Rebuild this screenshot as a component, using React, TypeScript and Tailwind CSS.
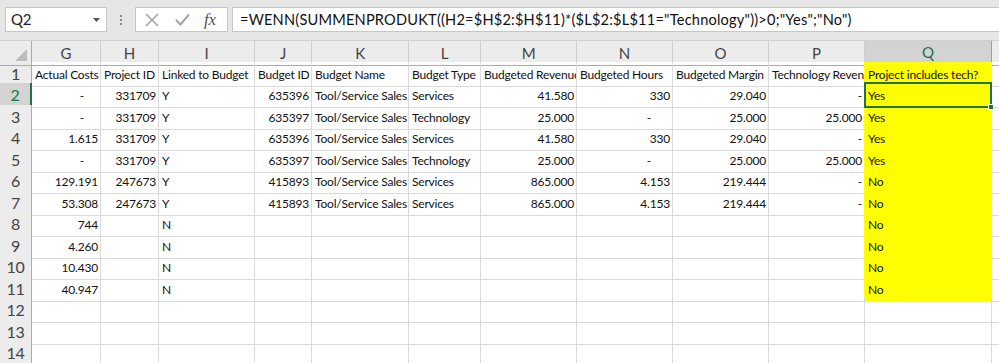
import React from 'react';

type Align = 'l' | 'r' | 'dashG' | 'dashN';

const aligns: Align[] = ['r', 'r', 'l', 'r', 'l', 'l', 'r', 'r', 'r', 'r', 'l'];
const letters = ['G', 'H', 'I', 'J', 'K', 'L', 'M', 'N', 'O', 'P', 'Q'];

const header = [
  'Actual Costs',
  'Project ID',
  'Linked to Budget',
  'Budget ID',
  'Budget Name',
  'Budget Type',
  'Budgeted Revenue',
  'Budgeted Hours',
  'Budgeted Margin',
  'Technology Revenue',
  'Project includes tech?',
];

const S = 'Tool/Service Sales';

const data: string[][] = [
  ['-', '331709', 'Y', '635396', S, 'Services', '41.580', '330', '29.040', '-', 'Yes'],
  ['-', '331709', 'Y', '635397', S, 'Technology', '25.000', '-', '25.000', '25.000', 'Yes'],
  ['1.615', '331709', 'Y', '635396', S, 'Services', '41.580', '330', '29.040', '-', 'Yes'],
  ['-', '331709', 'Y', '635397', S, 'Technology', '25.000', '-', '25.000', '25.000', 'Yes'],
  ['129.191', '247673', 'Y', '415893', S, 'Services', '865.000', '4.153', '219.444', '-', 'No'],
  ['53.308', '247673', 'Y', '415893', S, 'Services', '865.000', '4.153', '219.444', '-', 'No'],
  ['744', '', 'N', '', '', '', '', '', '', '', 'No'],
  ['4.260', '', 'N', '', '', '', '', '', '', '', 'No'],
  ['10.430', '', 'N', '', '', '', '', '', '', '', 'No'],
  ['40.947', '', 'N', '', '', '', '', '', '', '', 'No'],
  ['', '', '', '', '', '', '', '', '', '', ''],
  ['', '', '', '', '', '', '', '', '', '', ''],
  ['', '', '', '', '', '', '', '', '', '', ''],
];

const GRID = 'grid grid-cols-[32px_69px_58px_96px_57px_97px_72px_96px_96px_96px_96px_127px_7px]';

const FormulaBar: React.FC = () => (
  <div className="h-[40px] bg-[#e6e6e6] flex items-start pt-[7px]">
    {/* Name box */}
    <div className="ml-[5px] w-[102px] h-[25px] bg-white border border-[#c6c6c6] flex items-center justify-between pl-[5px] pr-[6px]">
      <span className="text-[15px] text-[#222]">Q2</span>
      <svg width="7" height="4" viewBox="0 0 7 4">
        <path d="M0 0h7L3.5 4z" fill="#555" />
      </svg>
    </div>
    <div className="w-[28px] h-[25px] flex flex-col items-center justify-center gap-[2px]">
      <span className="w-[2px] h-[2px] bg-[#8a8a8a]" />
      <span className="w-[2px] h-[2px] bg-[#8a8a8a]" />
      <span className="w-[2px] h-[2px] bg-[#8a8a8a]" />
    </div>
    {/* Cancel / Enter / fx */}
    <div className="w-[93px] h-[25px] bg-white border border-[#c6c6c6] flex items-center">
      <svg className="ml-[9px]" width="14" height="14" viewBox="0 0 14 14">
        <path d="M1 1l12 12M13 1L1 13" stroke="#a3a3a3" strokeWidth="1.6" fill="none" />
      </svg>
      <svg className="ml-[16px]" width="15" height="13" viewBox="0 0 15 13">
        <path d="M1 7l4.5 4.5L14 1.5" stroke="#a3a3a3" strokeWidth="2" fill="none" />
      </svg>
      <span className="ml-[14px] text-[17px] italic text-[#555] leading-none font-['Liberation_Serif',serif]">fx</span>
    </div>
    {/* Formula input */}
    <div className="ml-[4px] flex-1 h-[25px] bg-white border border-[#c6c6c6] border-r-0 flex items-center pl-[7px]">
      <span className="text-[14.6px] text-[#111] whitespace-nowrap tracking-[0.2px]">
        =WENN(SUMMENPRODUKT((H2=$H$2:$H$11)*($L$2:$L$11="Technology"))&gt;0;"Yes";"No")
      </span>
    </div>
  </div>
);

const ColumnHeaders: React.FC = () => (
  <div className={`${GRID} h-[22px] bg-[#ececec] border-t border-[#d0d0d0]`}>
    <div className="relative border-r border-b border-[#ababab]">
      <svg className="absolute right-[4px] bottom-[4px]" width="12" height="12" viewBox="0 0 12 12">
        <path d="M12 0V12H0z" fill="#bdbdbd" />
      </svg>
    </div>
    {letters.map((l) =>
      l === 'Q' ? (
        <div
          key={l}
          className="flex items-center justify-center bg-[#d3d3d3] text-[#217346] border-r border-[#9f9f9f] border-b-2 border-b-[#217346] text-[15px]"
        >
          {l}
        </div>
      ) : (
        <div key={l} className="flex items-center justify-center text-[#444] border-r border-[#cfcfcf] border-b border-b-[#ababab] text-[15px]">
          {l}
        </div>
      )
    )}
    <div className="border-b border-[#ababab]" />
  </div>
);

const Cell: React.FC<{ text: string; col: number; row: number }> = ({ text, col, row }) => {
  const yellow = col === 10 && row <= 11;
  const leftOfYellow = col === 9 && row <= 11;
  let align: Align = row === 1 ? 'l' : aligns[col];
  if (text === '-' && col === 0) align = 'dashG';
  if (text === '-' && col === 7) align = 'dashN';

  const justify =
    align === 'l'
      ? 'justify-start pl-[3px]'
      : align === 'dashG'
        ? 'justify-end pr-[16px]'
        : align === 'dashN'
          ? 'justify-end pr-[21px]'
          : 'justify-end pr-[2px]';

  const borders = yellow
    ? 'bg-[#ffff00] border-r border-b border-[#ffff00]'
    : leftOfYellow
      ? 'border-b border-b-[#dadada] border-r border-r-[#ffff00]'
      : 'border-r border-b border-[#dadada]';

  return (
    <div className={`relative ${borders}`}>
      <div className={`h-full flex items-end pb-[2px] overflow-hidden whitespace-nowrap ${justify}`}>
        <span>{text}</span>
      </div>
      {col === 10 && row === 2 && (
        <div className="absolute z-10 left-[-1px] top-[-1px] right-[-1px] bottom-[-1px] border-2 border-[#217346]">
          <div className="absolute right-[-4px] bottom-[-4px] w-[6px] h-[6px] bg-[#217346] border border-white" />
        </div>
      )}
    </div>
  );
};

const RowHeader: React.FC<{ n: number }> = ({ n }) =>
  n === 2 ? (
    <div className="flex items-center justify-center bg-[#d3d3d3] text-[#217346] text-[16px] border-r-2 border-r-[#217346] border-b border-b-[#c6c6c6]">
      {n}
    </div>
  ) : (
    <div className="flex items-center justify-center bg-[#ececec] text-[#444] text-[16px] border-r border-r-[#ababab] border-b border-b-[#d0d0d0]">
      {n}
    </div>
  );

export default function App() {
  const rows = [header, ...data];
  return (
    <div className="w-[999px] h-[363px] overflow-hidden bg-white font-['Lato','Liberation_Sans',sans-serif] text-[12px] tracking-[-0.2px] text-[#111]">
      <FormulaBar />
      <ColumnHeaders />
      {rows.map((r, i) => {
        const n = i + 1;
        return (
          <div key={n} className={`${GRID} ${n % 2 === 1 ? 'h-[21px]' : 'h-[22px]'}`}>
            <RowHeader n={n} />
            {r.map((t, c) => (
              <Cell key={c} text={t} col={c} row={n} />
            ))}
            <div className="border-b border-[#dadada]" />
          </div>
        );
      })}
    </div>
  );
}
